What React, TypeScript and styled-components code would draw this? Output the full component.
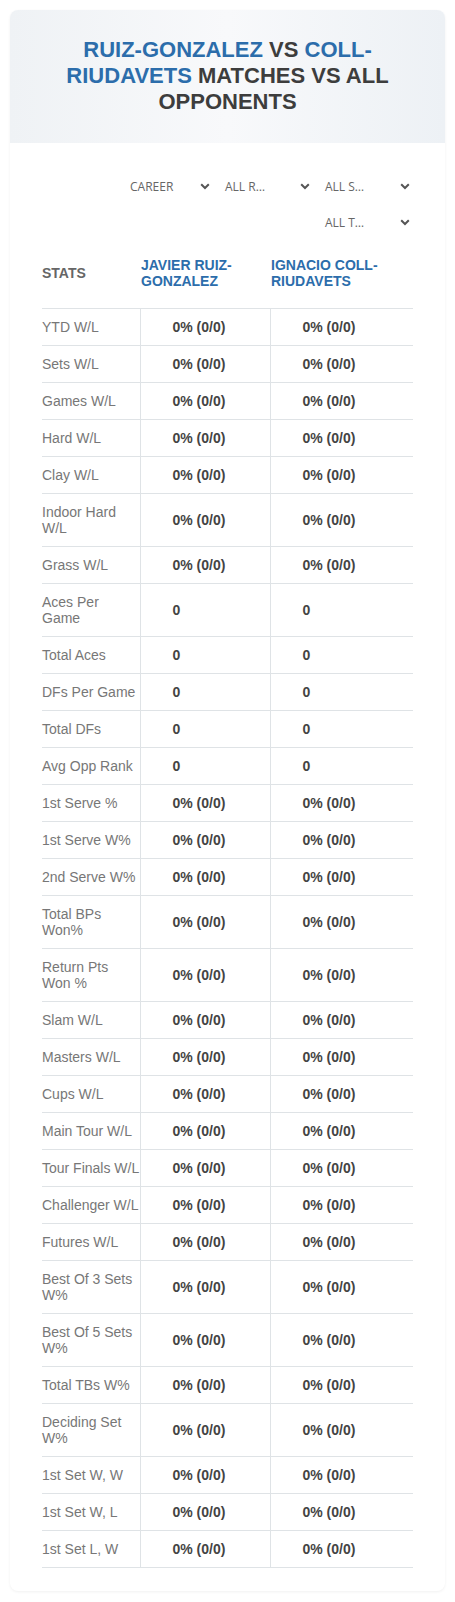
import React from "react";
import styled, { createGlobalStyle } from "styled-components";

const GlobalStyle = createGlobalStyle`
  html, body { margin: 0; padding: 0; background: #ffffff; }
  body { font-family: "Liberation Sans", Arial, sans-serif; }
  * { box-sizing: border-box; }
`;

const Page = styled.div`
  padding: 10px;
`;

const Card = styled.div`
  background: #ffffff;
  border-radius: 8px;
  box-shadow: 0 1px 3px rgba(0, 0, 0, 0.06);
  padding-bottom: 23px;
`;

const Hero = styled.div`
  background: linear-gradient(90deg, #eff2f5 0%, #f8f9fb 50%, #edf1f5 100%);
  border-radius: 8px 8px 0 0;
  padding: 27px 30px 28px;
`;

const Title = styled.h1`
  margin: 0;
  font-family: "Liberation Sans", Arial, sans-serif;
  font-size: 22px;
  line-height: 26px;
  font-weight: 700;
  text-align: center;
  color: #3d3d3d;
  text-transform: uppercase;
`;

const Name = styled.span`
  color: #2c6dab;
`;

const Body = styled.div`
  padding: 27px 32px 0 32px;
`;

const Filters = styled.div`
  display: flex;
  flex-wrap: wrap;
  justify-content: flex-end;
  column-gap: 7px;
  row-gap: 4px;
  margin-bottom: 1px;
`;

const Select = styled.div<{ $w: number }>`
  width: ${(p) => p.$w}px;
  height: 32px;
  display: flex;
  align-items: center;
  justify-content: space-between;
  padding: 0 3px 0 5px;
  font-family: "Open Sans", "Noto Sans", sans-serif;
  font-size: 12px;
  color: #666;
  text-transform: uppercase;
  cursor: pointer;
`;

const Chevron = () => (
  <svg width="10" height="7" viewBox="0 0 10 7" aria-hidden="true">
    <polyline points="1.2,1.3 5,5 8.8,1.3" fill="none" stroke="#555" strokeWidth="2" />
  </svg>
);

const Table = styled.table`
  width: 100%;
  table-layout: fixed;
  border-collapse: collapse;
  font-family: "Liberation Sans", Arial, sans-serif;
  font-size: 14px;
  line-height: 16px;
`;

const Th = styled.th<{ $w: number; $blue?: boolean }>`
  width: ${(p) => p.$w}px;
  text-align: left;
  vertical-align: middle;
  padding: 19px 0 19px ${(p) => (p.$blue ? 1 : 0)}px;
  font-weight: 700;
  font-size: 14px;
  line-height: 15.5px;
  color: ${(p) => (p.$blue ? "#2c6dab" : "#666")};
  text-transform: uppercase;
  border-bottom: 1px solid #dfe3e6;
`;

const Row = styled.tr`
  border-bottom: 1px solid #dfe3e6;
`;

const Label = styled.td`
  padding: 10px 0;
  color: #777;
  vertical-align: middle;
`;

const Value = styled.td`
  padding: 10px 4px 10px 32px;
  font-weight: 700;
  color: #444;
  vertical-align: middle;
  border-left: 1px solid #dfe3e6;
`;

type Stat = { label: string; v: string };
const pct = "0% (0/0)";
const stats: Stat[] = [
  { label: "YTD W/L", v: pct },
  { label: "Sets W/L", v: pct },
  { label: "Games W/L", v: pct },
  { label: "Hard W/L", v: pct },
  { label: "Clay W/L", v: pct },
  { label: "Indoor Hard W/L", v: pct },
  { label: "Grass W/L", v: pct },
  { label: "Aces Per Game", v: "0" },
  { label: "Total Aces", v: "0" },
  { label: "DFs Per Game", v: "0" },
  { label: "Total DFs", v: "0" },
  { label: "Avg Opp Rank", v: "0" },
  { label: "1st Serve %", v: pct },
  { label: "1st Serve W%", v: pct },
  { label: "2nd Serve W%", v: pct },
  { label: "Total BPs Won%", v: pct },
  { label: "Return Pts Won %", v: pct },
  { label: "Slam W/L", v: pct },
  { label: "Masters W/L", v: pct },
  { label: "Cups W/L", v: pct },
  { label: "Main Tour W/L", v: pct },
  { label: "Tour Finals W/L", v: pct },
  { label: "Challenger W/L", v: pct },
  { label: "Futures W/L", v: pct },
  { label: "Best Of 3 Sets W%", v: pct },
  { label: "Best Of 5 Sets W%", v: pct },
  { label: "Total TBs W%", v: pct },
  { label: "Deciding Set W%", v: pct },
  { label: "1st Set W, W", v: pct },
  { label: "1st Set W, L", v: pct },
  { label: "1st Set L, W", v: pct },
];

const filters = [
  { text: "Career", w: 88 },
  { text: "All R…", w: 93 },
  { text: "All S…", w: 93 },
  { text: "All T…", w: 93 },
];

export default function App() {
  return (
    <>
      <GlobalStyle />
      <Page>
        <Card>
          <Hero>
            <Title>
              <Name>Ruiz-Gonzalez</Name> vs <Name>Coll-Riudavets</Name> Matches vs All Opponents
            </Title>
          </Hero>
          <Body>
            <Filters>
              {filters.map((f) => (
                <Select key={f.text} $w={f.w}>
                  <span>{f.text}</span>
                  <Chevron />
                </Select>
              ))}
            </Filters>
            <Table>
              <thead>
                <tr>
                  <Th $w={98}>Stats</Th>
                  <Th $w={130} $blue>
                    Javier Ruiz-Gonzalez
                  </Th>
                  <Th $w={143} $blue>
                    Ignacio Coll-Riudavets
                  </Th>
                </tr>
              </thead>
              <tbody>
                {stats.map((s) => (
                  <Row key={s.label}>
                    <Label>{s.label}</Label>
                    <Value>{s.v}</Value>
                    <Value>{s.v}</Value>
                  </Row>
                ))}
              </tbody>
            </Table>
          </Body>
        </Card>
      </Page>
    </>
  );
}
